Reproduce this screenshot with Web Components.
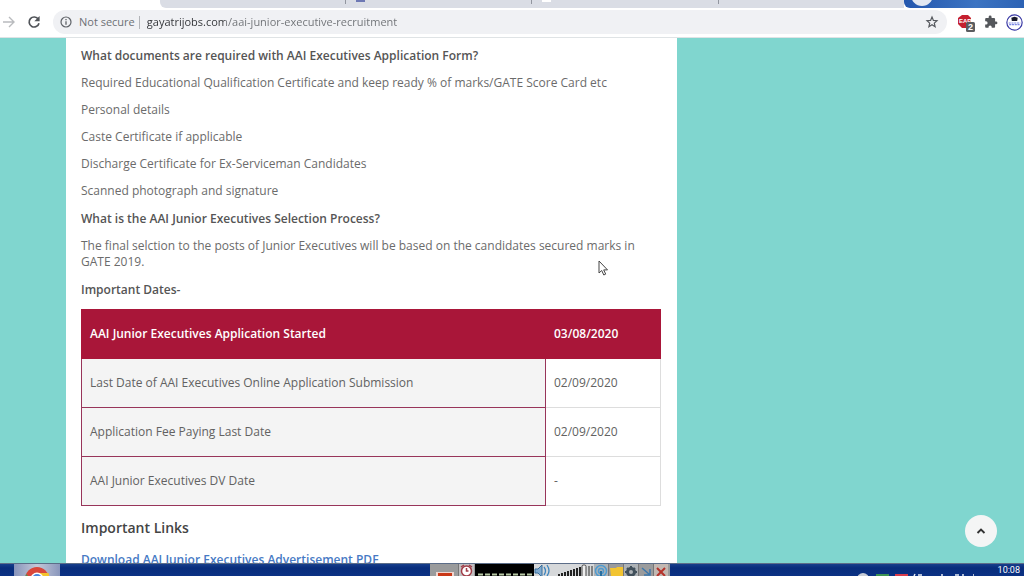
<!DOCTYPE html>
<html lang="en">
<head>
<meta charset="utf-8">
<meta name="viewport" content="width=device-width, initial-scale=1">
<title>AAI Junior Executive Recruitment</title>
<style>
  html, body { margin: 0; height: 100%; }
  body { font-family: "Open Sans", sans-serif; }
</style>
</head>
<body>
<desktop-screen>
  <browser-bar slot="bar"></browser-bar>
  <job-article>
    <faq-entry heading="What documents are required with AAI Executives Application Form?">
      <p>Required Educational Qualification Certificate and keep ready % of marks/GATE Score Card etc</p>
      <p>Personal details</p>
      <p>Caste Certificate if applicable</p>
      <p>Discharge Certificate for Ex-Serviceman Candidates</p>
      <p>Scanned photograph and signature</p>
    </faq-entry>
    <faq-entry heading="What is the AAI Junior Executives Selection Process?">
      <p>The final selction to the posts of Junior Executives will be based on the candidates secured marks in GATE 2019.</p>
    </faq-entry>
    <faq-entry heading="Important Dates-"><dates-table></dates-table></faq-entry>
    <link-list></link-list>
  </job-article>
  <back-to-top slot="float"></back-to-top>
  <mouse-pointer slot="float"></mouse-pointer>
  <task-bar slot="tasks"></task-bar>
</desktop-screen>

<script>
const define = (name, html) => customElements.define(name, class extends HTMLElement {
  constructor() {
    super();
    this.attachShadow({ mode: 'open' }).innerHTML = html;
    const title = this.shadowRoot.querySelector('[data-heading]');
    if (title) title.textContent = this.getAttribute('heading');
  }
});

define('desktop-screen', `
<style>
  :host { display: grid; grid-template-rows: auto minmax(0, 1fr) auto; height: 100vh; position: relative; overflow: hidden; background: #fff; }
  main { display: grid; grid-template-columns: 66fr 611fr 347fr; background: #80d6cf; overflow: hidden; }
  ::slotted(job-article) { grid-column: 2; }
</style>
<slot name="bar"></slot>
<main><slot></slot></main>
<slot name="tasks"></slot>
<slot name="float"></slot>`);

define('browser-bar', `
<style>
  :host { display: block; background: #fff; border-bottom: 1px solid #dfe3e5; font-family: "Open Sans", sans-serif; }
  .tabs { display: grid; grid-template-columns: 160fr 744fr 120fr; height: 8px; overflow: hidden; }
  .tabs .rest { grid-column: 2; background: #dadde5; border-radius: 0 0 0 6px; display: grid; grid-template-columns: 186fr 186fr 187fr 185fr; }
  .rest span { height: 4px; border-right: 1px solid #92969f; padding-left: 10px; }
  .rest span:last-child { border: 0; }
  .rest i { display: block; height: 2px; width: 9px; }
  .rest span:nth-child(2) i { background: #6d78b4; }
  .rest span:nth-child(3) i { background: #fff; }
  .sky { background: linear-gradient(90deg, #2457ae, #3c74c2 60%, #2c62b4); border-radius: 0 0 0 6px; overflow: hidden; }
  .sky svg { display: block; margin-left: 6px; }
  .tools { display: flex; align-items: center; height: 24px; padding: 2px 1px 3px 2px; }
  button { border: 0; padding: 0; background: none; display: grid; place-items: center; flex: none; }
  svg { display: block; }
  .fwd { width: 14px; } .load { width: 18px; margin: 0 10px 0 9px; }
  form { flex: 1; min-width: 0; height: 24px; border-radius: 12px; background: #f0f1f4; display: flex; align-items: center; padding: 0 8px 0 7px; margin-right: 10px; }
  label { font-size: 11px; line-height: 16px; color: #6d7074; margin-left: 7px; white-space: nowrap; }
  .line { width: 1px; height: 13px; background: #b2b4b8; margin: 0 7px 0 4px; }
  input { flex: 1; min-width: 0; border: 0; outline: 0; padding: 0; height: 18px; font: 11px/18px "Open Sans", sans-serif; color: transparent;
    background: linear-gradient(90deg, #303236 78px, #6d7074 78px); -webkit-background-clip: text; background-clip: text; }
  .ext { display: flex; align-items: center; gap: 8px; }
</style>
<div class="tabs"><div class="rest"><span></span><span><i></i></span><span><i></i></span><span></span></div>
  <div class="sky"><svg width="24" height="8"><circle cx="12" cy="-5" r="11" fill="#e2e8f2"/></svg></div></div>
<div class="tools">
  <button class="fwd" aria-label="Forward"><svg width="14" height="14" viewBox="0 0 14 14" fill="none" stroke="#b9bbbe" stroke-width="1.4"><path d="M1 7h10.500M7 2l5 5-5 5"/></svg></button>
  <button class="load" aria-label="Reload"><svg width="14" height="14" viewBox="0 0 14 14"><path d="M11.300 4.200A5 5 0 1 0 12 8.200" fill="none" stroke="#515459" stroke-width="1.700"/><path d="M12.600 1v5.300H7.300z" fill="#515459"/></svg></button>
  <form onsubmit="return false">
    <svg width="12" height="12" viewBox="0 0 12 12"><circle cx="6" cy="6" r="5" fill="none" stroke="#5f6368" stroke-width="1.200"/><path d="M6 5.200v3.600M6 3v1.300" stroke="#5f6368" stroke-width="1.300"/></svg>
    <label for="url">Not secure</label><span class="line"></span>
    <input id="url" type="text" value="gayatrijobs.com/aai-junior-executive-recruitment">
    <button type="button" aria-label="Bookmark this page"><svg width="14" height="14" viewBox="0 0 14 14"><path d="M7 2l1.400 3.400 3.600.3-2.700 2.400.8 3.600L7 9.800l-3.100 1.900.8-3.600L2 5.700l3.600-.3z" fill="none" stroke="#55585d" stroke-width="1.200"/></svg></button>
  </form>
  <div class="ext">
    <button aria-label="EAR extension, 2"><svg width="19" height="20" viewBox="0 0 19 20"><path d="M5 3h6l3 3v6l-3 4H5l-4-4V6z" fill="#c5202f"/><text x="2" y="11" font-family="Liberation Sans, sans-serif" font-size="6" font-weight="700" fill="#fff">EAR</text><rect x="9" y="10" width="9" height="10" rx="1.500" fill="#5b5d60"/><text x="11" y="18" font-family="Liberation Sans, sans-serif" font-size="9" font-weight="700" fill="#fff">2</text></svg></button>
    <button aria-label="Extensions"><svg width="14" height="14" viewBox="0 0 24 24"><path d="M20.500 11H19V7c0-1.100-.9-2-2-2h-4V3.500a2.500 2.500 0 0 0-5 0V5H4c-1.100 0-2 .9-2 2v3.800h1.500a2.700 2.700 0 0 1 0 5.400H2V20c0 1.100.9 2 2 2h3.800v-1.500a2.700 2.700 0 0 1 5.400 0V22H17c1.100 0 2-.9 2-2v-4h1.500a2.500 2.500 0 0 0 0-5z" fill="#54575b"/></svg></button>
    <button aria-label="Profile"><svg width="17" height="17" viewBox="0 0 16 16"><circle cx="8" cy="8" r="7.200" fill="#fff" stroke="#3737a4" stroke-width="1.100"/><path d="M5 3.500L8 2.500l3 1L10.500 6.500h-5z" fill="#17182a"/><path d="M2.500 8.500h11M3 10h10" stroke="#7d88e4" stroke-width="1" stroke-dasharray="2 .6"/></svg></button>
  </div>
</div>`);

define('job-article', `
<style>
  :host { display: flex; flex-direction: column; gap: 12px; box-sizing: border-box; background: #fff; padding: 10px 16px 0 15px; color: #6b6b6b; font-size: 12px; line-height: 16px; min-height: 100%; }
</style><slot></slot>`);

define('faq-entry', `
<style>
  :host { display: flex; flex-direction: column; gap: 11px; }
  h3 { margin: 0; font-size: 12px; line-height: 16px; font-weight: 600; color: #555; }
  ::slotted(p) { margin: 0; }
</style>
<h3 data-heading></h3><slot></slot>`);

define('dates-table', `
<style>
  :host { display: block; }
  table { width: 100%; border-collapse: collapse; table-layout: fixed; font-size: 12px; line-height: 16px; font-weight: 500; color: #626262; }
  col:last-child { width: 115px; }
  th, td { padding: 16px 8px; text-align: left; border: 1px solid #ddd; font-weight: 500; }
  thead th { background: #a91639; color: #fff; border-color: #a91639; font-weight: 600; }
  tbody th { background: #f4f4f4; border-color: #98355a; }
</style>
<table>
  <colgroup><col><col></colgroup>
  <thead><tr><th scope="col">AAI Junior Executives Application Started</th><th scope="col">03/08/2020</th></tr></thead>
  <tbody>
    <tr><th scope="row">Last Date of AAI Executives Online Application Submission</th><td>02/09/2020</td></tr>
    <tr><th scope="row">Application Fee Paying Last Date</th><td>02/09/2020</td></tr>
    <tr><th scope="row">AAI Junior Executives DV Date</th><td>-</td></tr>
  </tbody>
</table>`);

define('link-list', `
<style>
  :host { display: block; }
  h2 { margin: 0 0 14px; font-size: 14px; line-height: 20px; font-weight: 600; color: #444; }
  a { display: block; color: #4679c4; font-weight: 600; text-decoration: none; }
</style>
<h2>Important Links</h2>
<a href="#advertisement">Download AAI Junior Executives Advertisement PDF</a>`);

define('back-to-top', `
<style>
  :host { position: absolute; right: 27px; bottom: 29px; }
  button { display: grid; place-items: center; width: 32px; height: 32px; padding: 0; border: 0; border-radius: 50%; background: #f4f5f5; }
</style>
<button aria-label="Back to top"><svg width="10" height="8" viewBox="0 0 10 8"><path d="M1.500 6L5 2.600 8.500 6" fill="none" stroke="#333" stroke-width="1.900"/></svg></button>`);

define('mouse-pointer', `
<style>:host { position: absolute; left: 598px; top: 260px; pointer-events: none; } svg { display: block; }</style>
<svg width="11" height="16" viewBox="0 0 11 16"><path d="M1 1v12l2.700-2.500L5.800 15l1.900-.9-2-4.200H9.500z" fill="#fff" stroke="#444" stroke-width="1"/></svg>`);

define('task-bar', `
<style>
  :host { display: grid; grid-template-columns: 430fr 240fr 354fr; height: 12px; overflow: hidden; border-top: 1px solid #5c6d88; background: linear-gradient(#173f8c, #082d7c 4px, #0b3184); }
  svg { display: block; }
  .app { width: 46px; height: 12px; margin-left: 14px; padding: 0; border: 0; background: linear-gradient(90deg, #8894bb, #c3c8d8 50%, #8996bc); display: block; }
  .app svg { margin: 0 auto; }
  .gadget { background: #9a9b9c; overflow: hidden; }
  .tray { display: flex; justify-content: flex-end; color: #fff; }
  time { font: 9px/11px Roboto, sans-serif; padding: 1px 4px 0 0; white-space: nowrap; }
</style>
<div><button class="app" aria-label="Chrome"><svg width="24" height="12" viewBox="0 0 24 12"><circle cx="12" cy="15" r="12" fill="#d9473b"/><path d="M12 9h11.500a12 12 0 0 1 .5 6H12z" fill="#f3c32e"/><path d="M1 10l5 5H0z" fill="#449a52"/><circle cx="12" cy="15" r="6.500" fill="#fff"/><circle cx="12" cy="15" r="5" fill="#4b86de"/></svg></button></div>
<div class="gadget"><svg width="240" height="12" viewBox="0 0 240 12">
  <path d="M6 12V8h18v4z" fill="#f0d4cd"/><path d="M8 9h14v3H8z" fill="#c93817"/>
  <path d="M29 0h15v12H29z" fill="#c0bec0"/><circle cx="36.500" cy="7" r="5" fill="#fff" stroke="#a13c47" stroke-width="1.500"/><path d="M36.500 4v3h2M31 3l3-2M42 3l-3-2" fill="none" stroke="#a13c47" stroke-width="1.500"/>
  <path d="M45 0h59v12H45z" fill="#000"/><path d="M48 10.500h54" stroke="#b8c9a5" stroke-width="2" stroke-dasharray="5 2"/>
  <path d="M104 0h60v12h-60z" fill="#d6d8da"/><path d="M105 5h3l4-4v12l-4-4h-3z" fill="#80abd0" stroke="#386e9c"/><path d="M114 3q3 4 0 8M117 1q4 6 0 11" fill="none" stroke="#3f86bf" stroke-width="1.300"/>
  <path d="M129 12v-2M132 12V9M135 12V8M138 12V7M141 12V6M144 12V5M147 12V4M150 12V3" stroke="#222" stroke-width="2"/>
  <rect x="152" y="1" width="4" height="13" rx="1.500" fill="#eee" stroke="#444"/><path d="M159 12V2M162 12V2" stroke="#666" stroke-width="1.500"/>
  <path d="M164 0h14v12h-14zM194 0h14v12h-14z" fill="#adb2b6"/>
  <g fill="none" stroke="#4f9bd0" stroke-width="1.500"><circle cx="171" cy="7" r="5.500"/><circle cx="171" cy="7" r="2.500"/></g><path d="M171 7v5" stroke="#286e9f" stroke-width="2"/>
  <path d="M180 4h6l1-1h6v9h-12z" fill="#f2c431"/>
  <circle cx="201" cy="8" r="3.500" fill="none" stroke="#41505b" stroke-width="3"/><path d="M201 2v3M195 8h2M205 8h2M197 4l2 2M205 4l-2 2" stroke="#41505b" stroke-width="2"/>
  <path d="M212 4l8 7M220 5v6h-6" fill="none" stroke="#3c78ac" stroke-width="1.500"/>
  <path d="M224 0h14v12h-14z" fill="#c2b8b2"/><path d="M227 4l8 8M235 4l-8 8" stroke="#b5322a" stroke-width="2"/>
  <path d="M28.500 0v12M178.500 0v12M193.500 0v12M208.500 0v12M223.500 0v12" stroke="#777"/>
</svg></div>
<div class="tray"><svg width="141" height="12" viewBox="0 0 141 12"><circle cx="6" cy="15" r="6" fill="#c7ccd5"/><path d="M19 10h13v2H19z" fill="#3d9353"/><path d="M38 10h13v2H38z" fill="#d83b4b"/><path d="M58 10l-1 2M61 11h4M84 11h2M98 11h4M105 11h2M116 11h1" stroke="#e8edf5" stroke-width="1.500"/></svg><time>10:08</time></div>`);
</script>
</body>
</html>
